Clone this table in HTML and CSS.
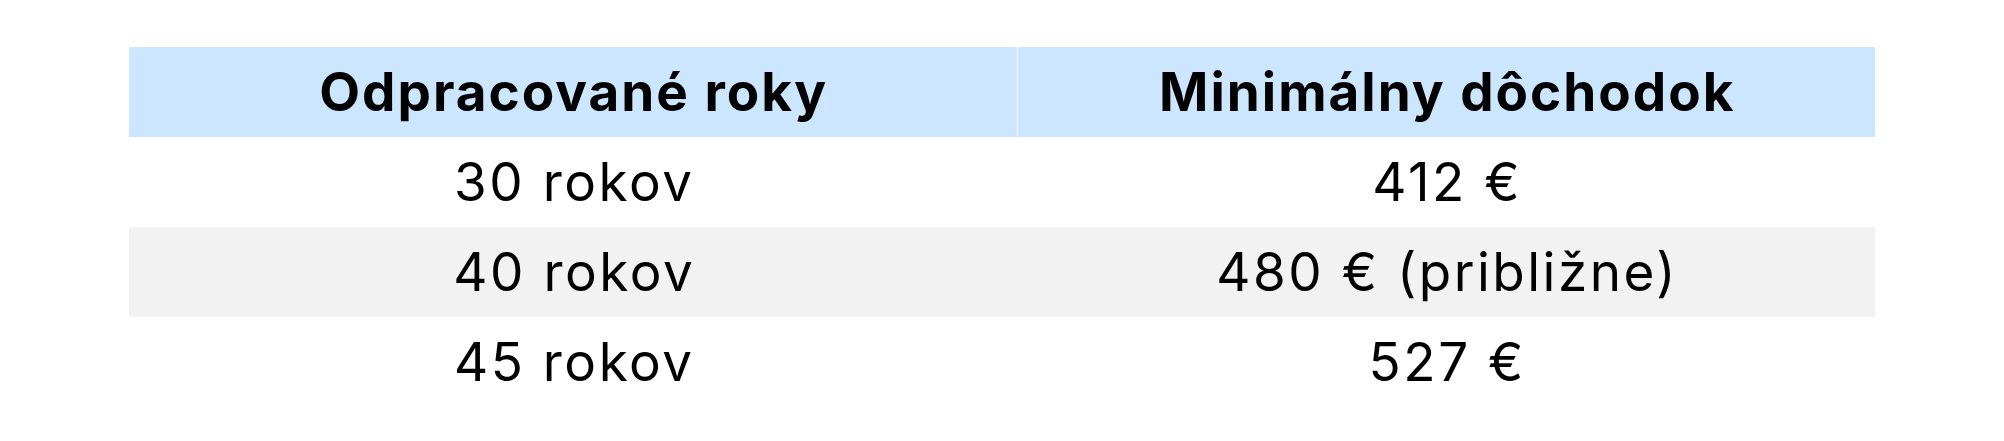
FILE: index.html
```html
<!DOCTYPE html>
<html lang="sk">
<head>
<meta charset="utf-8">
<title>Minimálny dôchodok</title>
<link rel="stylesheet" href="styles.css">
</head>
<body>
<div class="page">
  <table class="pension">
    <colgroup>
      <col class="col-years">
      <col class="col-amount">
    </colgroup>
    <thead>
      <tr>
        <th class="sep">Odpracované roky</th>
        <th>Minimálny dôchodok</th>
      </tr>
    </thead>
    <tbody>
      <tr>
        <td>30 rokov</td>
        <td>412 €</td>
      </tr>
      <tr class="alt">
        <td>40 rokov</td>
        <td>480 € (približne)</td>
      </tr>
      <tr>
        <td>45 rokov</td>
        <td>527 €</td>
      </tr>
    </tbody>
  </table>
</div>
</body>
</html>
```

FILE: styles.css
```css
html, body {
  margin: 0;
  padding: 0;
  background: #ffffff;
}

.page {
  padding: 47px 0 0 129px;
}

.pension {
  border-collapse: collapse;
  table-layout: fixed;
  width: 1746px;
  font-family: Inter, "Liberation Sans", sans-serif;
  color: #000000;
}

.col-years {
  width: 888px;
}

.col-amount {
  width: 858px;
}

.pension th,
.pension td {
  height: 90px;
  text-align: center;
  vertical-align: middle;
  font-size: 53px;
  line-height: 1;
}

.pension th {
  padding: 0 0 0 2px;
  background: #cbe6fe;
  font-weight: 700;
  letter-spacing: 2px;
}

.pension th.sep {
  border-right: 1px solid #ffffff;
}

.pension td {
  padding: 0 0 0 2.5px;
  font-weight: 400;
  letter-spacing: 2.5px;
}

.pension tr.alt td {
  background: #f2f2f2;
}
```
